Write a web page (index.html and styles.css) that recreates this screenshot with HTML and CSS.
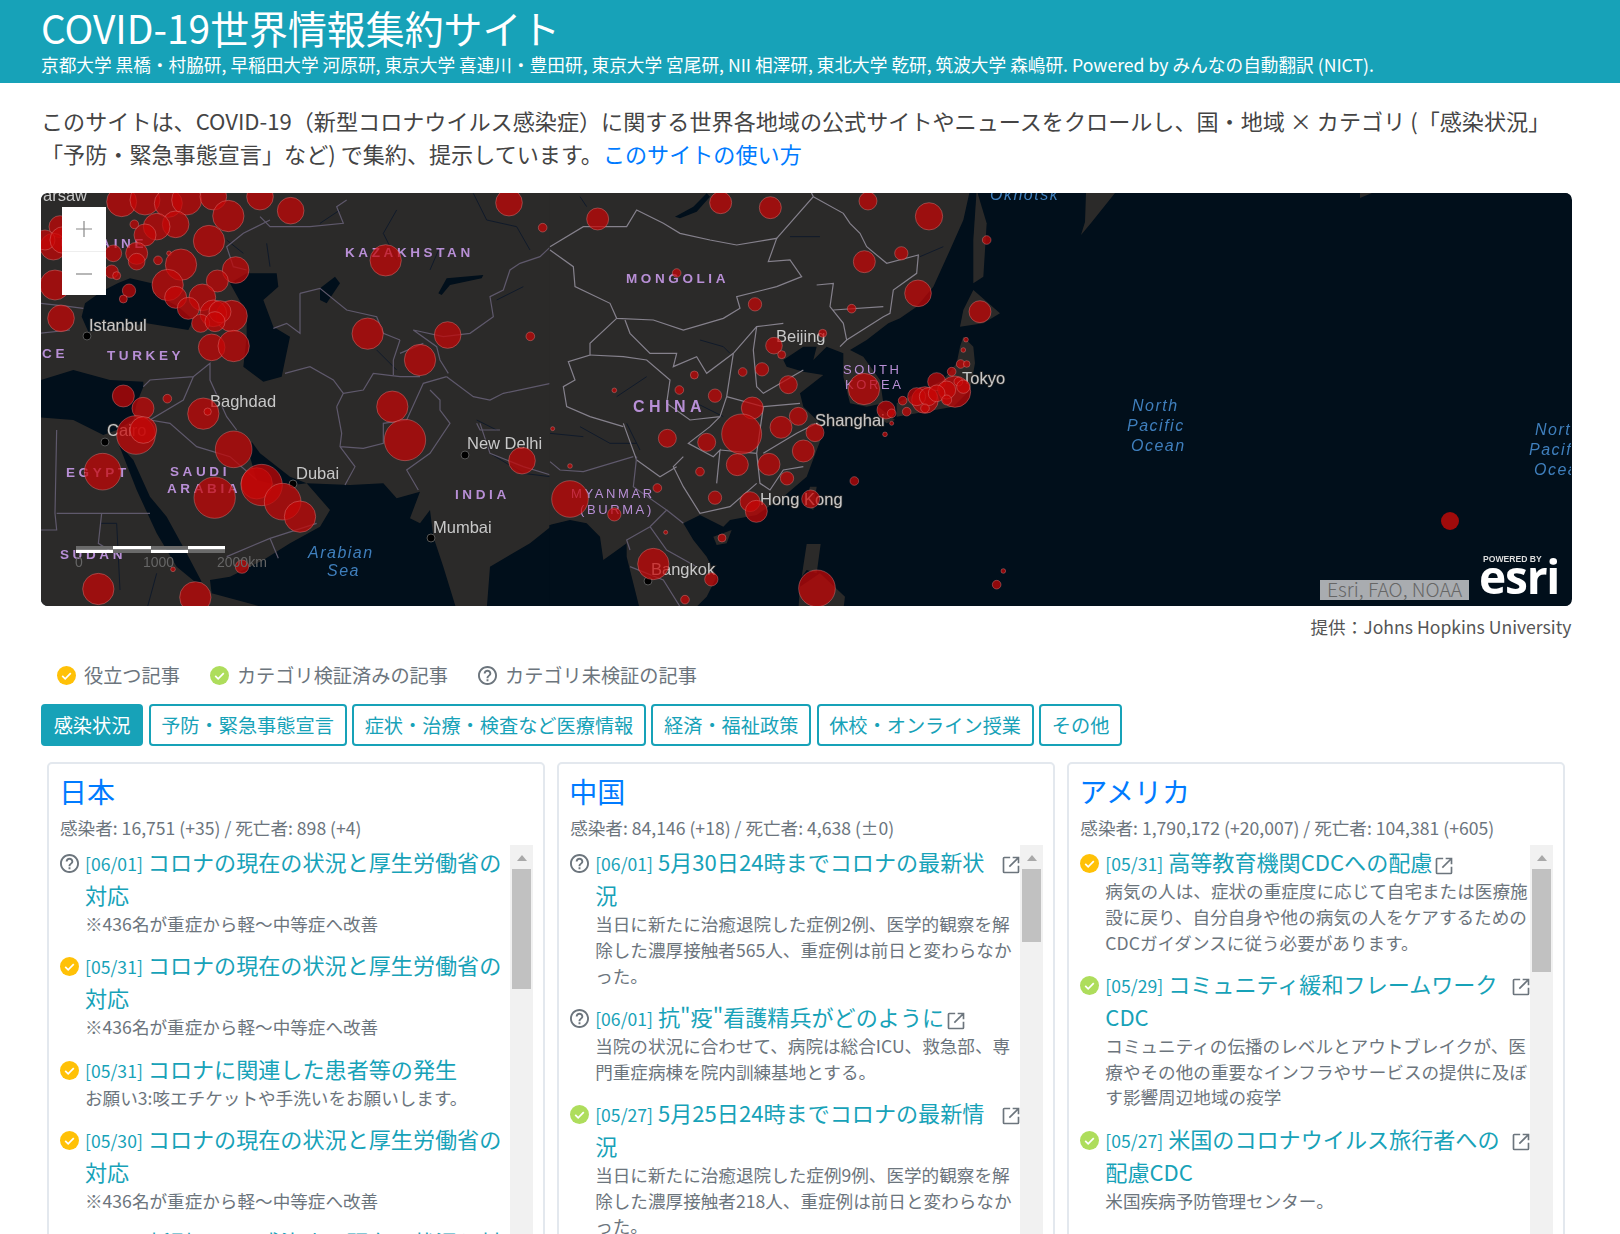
FILE: index.html
```html
<!DOCTYPE html>
<html lang="ja">
<head>
  <meta charset="UTF-8">
  <title>COVID-19世界情報集約サイト</title>
  <link rel="stylesheet" href="styles.css">
</head>
<body>

  <svg class="defs">
    <symbol id="check" viewBox="0 0 20 20">
      <circle cx="10" cy="10" r="10" fill="currentColor"/>
      <path d="M5.5 10.3l3.1 3.1 5.9-6" fill="none" stroke="#fff" stroke-width="1.8"/>
    </symbol>
    <symbol id="help" viewBox="2 2 20 20">
      <path fill="currentColor" d="M11 18h2v-2h-2v2zm1-16C6.48 2 2 6.48 2 12s4.48 10 10 10 10-4.48 10-10S17.52 2 12 2zm0 18c-4.41 0-8-3.59-8-8s3.59-8 8-8 8 3.59 8 8-3.59 8-8 8zm0-14c-2.21 0-4 1.79-4 4h2c0-1.1.9-2 2-2s2 .9 2 2c0 2-3 1.75-3 5h2c0-2.25 3-2.5 3-5 0-2.21-1.79-4-4-4z"/>
    </symbol>
    <symbol id="ext" viewBox="0 0 24 24">
      <path d="M11 3H4a1 1 0 0 0-1 1v16a1 1 0 0 0 1 1h16a1 1 0 0 0 1-1v-7M10 14L21 3M14 3h7v7" fill="none" stroke="currentColor" stroke-width="2"/>
    </symbol>
  </svg>

  <header class="site-header">
    <h1>COVID-19世界情報集約サイト</h1>
    <p>京都大学 黒橋・村脇研, 早稲田大学 河原研, 東京大学 喜連川・豊田研, 東京大学 宮尾研, NII 相澤研, 東北大学 乾研, 筑波大学 森嶋研. Powered by みんなの自動翻訳 (NICT).</p>
  </header>

  <main class="content">
    <p class="intro">このサイトは、COVID-19（新型コロナウイルス感染症）に関する世界各地域の公式サイトやニュースをクロールし、国・地域 × カテゴリ (「感染状況」「予防・緊急事態宣言」など) で集約、提示しています。<a href="#">このサイトの使い方</a></p>

    <div class="map">
      <svg class="map-svg" viewBox="41 193 1530 413" width="1530" height="413">
        <rect class="sea" x="41" y="193" width="1530" height="413"/>

        <!-- west half -->
        <g transform="translate(30 190) scale(.33333)">
          <rect class="land" x="0" y="0" width="1562" height="1260"/>
          <g class="sea">
            <path d="M165 340Q230 290 300 265L365 280 370 310 445 350 490 390 475 420 350 400 290 410 230 420 175 425 155 380Z"/>
            <path d="M600 280L650 250 740 250 745 290 700 330 730 410 780 440 755 560 700 575 640 530 650 440 650 370Z"/>
            <path d="M0 580L130 540 240 570 340 575 340 590 320 640 310 690 260 720 220 735 130 690 0 680Z"/>
            <path d="M265 760L310 810 360 920 410 980 470 1090 515 1175 500 1180 440 1130 380 1030 320 900Z"/>
            <path d="M665 755L690 790 780 860 830 880 790 885 720 880 680 870 660 800Z"/>
            <path d="M830 880L960 885 1060 880 1100 925 1170 905 1140 985 1170 1000 1200 960 1210 1040 1240 1130 1280 1260 730 1260 545 1210 540 1170 600 1160 700 1110 780 1060 870 1010 900 960Z"/>
            <path d="M1380 1130L1500 1060 1562 1010 1562 1260 1370 1260Z"/>
            <path d="M1225 310L1250 265 1360 255 1355 265 1260 285 1235 315Z"/>
            <path d="M870 295L915 260 930 280 890 340 870 330Z"/>
          </g>
          <g class="river">
            <path d="M1330 10L1370 90 1460 110 1500 180M1100 60L1060 130 1100 210M710 160L720 230M590 150L640 190"/>
            <path d="M1040 480L1100 540M1340 690L1400 720M1380 790L1480 850 1560 860M210 1000L260 1000 270 1200M380 1150L350 1260"/>
            <path d="M870 100L930 60M1230 170L1200 240M1480 290L1400 330"/>
          </g>
          <g class="border">
            <path d="M810 310L870 295 950 360 1040 380 1060 430 1110 450M810 310L810 430 770 400 730 415"/>
            <path d="M765 550L840 530 910 570 940 610 920 650M940 610L1000 600 1030 550 1110 560 1170 560"/>
            <path d="M920 650L935 730 930 770 975 830 945 885M930 770L1000 775 1060 760 1060 700 1130 690 1180 580 1250 560"/>
            <path d="M1200 600L1230 630 1230 660 1260 700 1200 790 1130 840 1165 900"/>
            <path d="M1250 560L1330 620 1380 630 1420 610 1562 580M1350 700L1380 790 1480 830 1562 855"/>
            <path d="M690 80L720 110 840 110 940 100 920 50 950 30M720 90L640 130 590 170 610 230 650 240"/>
            <path d="M1562 170L1530 200 1470 220 1440 240 1420 300 1380 320 1390 380 1320 430 1240 440 1150 420 1220 470 1230 510 1255 550"/>
            <path d="M1110 450L1090 510 1090 555M1110 490L1180 460"/>
            <path d="M340 590L360 570 490 560 540 520 540 570 590 680 620 720M490 560L460 630 360 690 420 700 500 770 600 800 680 870"/>
            <path d="M80 720L75 970 80 1020 30 1020M80 970L290 970 360 970M215 970L205 1060 270 1100"/>
            <path d="M590 1100L720 1045 860 1000M720 1045L745 1105"/>
            <path d="M1340 700L1350 720 1410 720"/>
            <path d="M30 340L120 350 160 355M30 430L120 420"/>
          </g>
        </g>

        <!-- east half -->
        <g transform="translate(550 190) scale(.33333)">
          <path class="sea" d="M-2 1005L60 990 110 1000 150 1040 160 1110 230 1060 230 1100 270 1260-2 1260Z"/>
          <path class="land" d="M-2 0H1260L1240 90 1200 180 1150 290 1100 350 1050 385 1015 400 950 450 900 480 940 500 990 570 1000 640 950 650 900 640 880 560 880 490 830 470 790 510 800 470 760 470 700 510 710 530 760 545 820 555 750 610 760 650 810 700 820 730 800 780 770 860 700 920 620 975 540 990 520 1010 450 975 400 1000 430 1050 470 1100 500 1160 470 1220 430 1260H270L230 1100 230 1060 160 1110 150 1040 110 1000 60 990-2 1005Z"/>
          <g class="land">
            <path d="M1280 0L1310 100 1300 260 1270 280 1270 150Z"/>
            <path d="M1270 300L1350 370 1300 400 1230 410 1240 360Z"/>
            <path d="M1240 440L1270 470 1275 520 1260 600 1210 650 1100 670 1040 680 1040 640 1100 610 1180 570 1220 520 1230 470Z"/>
            <path d="M985 650L1035 690 1010 700 985 680Z"/>
            <path d="M490 1040L545 1020 530 1060 500 1065Z"/>
            <path d="M780 890L800 890 790 960 765 945Z"/>
            <path d="M770 1062H812L800 1150 770 1140 755 1160Z"/>
            <path d="M750 1190L810 1150 885 1220 880 1260H745Z"/>
          </g>
          <path class="sea" d="M375 80L430 50 470 10 480 20 440 65 390 85Z"/>
          <g class="river">
            <path d="M90 20L110 50M450 450L520 470 540 490M90 710L180 760 260 760M0 730L100 740M230 700L270 780"/>
            <path d="M720 140L810 140M1110 200L1180 170M440 640L520 680M200 620L290 560"/>
          </g>
          <g class="border bright">
            <path d="M0 170L100 110 230 110 260 60 340 100 390 130 480 150 560 165 680 145 655 215 720 210 755 260 680 290 640 300 560 320 570 355 520 385 400 420 310 390 200 385 180 340 75 290 70 230 0 180"/>
            <path d="M680 145L790 20 780 0M790 20L880 70 900 100 930 130 950 170 1010 220 1105 195 1100 250 1030 300 1020 370 1000 380 890 450 870 470"/>
            <path d="M800 285L850 280 840 350 880 400 890 450M850 360L1000 350"/>
            <path d="M200 385L120 460 120 495 55 515 75 570 40 590 50 650 120 680 220 710"/>
            <path d="M225 390L240 430 300 490 380 490 370 530 440 500 470 550 550 490 620 410 700 400"/>
            <path d="M120 495L220 500 290 510 360 570 350 640 420 690 510 680M550 490L530 620 510 680"/>
            <path d="M510 680L480 710 415 760 490 800 510 780 500 880M400 800L370 830 400 890 450 970 540 950 620 880"/>
            <path d="M640 790L740 730 800 700M620 790L630 880 660 900 700 840 760 830M510 780L620 790 640 650 530 620"/>
            <path d="M620 410L610 480 620 590 640 610 760 540M640 650L750 640"/>
            <path d="M260 810L220 700M260 810L330 860 380 830"/>
          </g>
          <g class="border">
            <path d="M260 800L250 890 350 960 300 1010 230 1050 240 1080M0 815L30 840 100 845 250 800"/>
            <path d="M350 960L400 1000M300 1010L350 1080 440 1130M240 1130L340 1170 390 1250"/>
          </g>
        </g>
        <path class="land" d="M1086 193H1115L1091 223 1081 235 1085 222ZM1360 198L1372 193H1360Z"/>

        <!-- city dots -->
        <g class="city-dot">
          <circle cx="87" cy="336" r="4"/><circle cx="105" cy="442" r="4"/><circle cx="293" cy="484" r="4"/><circle cx="465" cy="455" r="4"/><circle cx="431" cy="538" r="4"/><circle cx="648" cy="581" r="4"/>
        </g>

        <!-- labels sit under the case circles -->
        <g class="country">
          <text x="345" y="257">KAZAKHSTAN</text>
          <text x="107" y="360">TURKEY</text>
          <text x="68" y="358" text-anchor="end">GREECE</text>
          <text x="147" y="248" text-anchor="end">UKRAINE</text>
          <text x="66" y="477">EGYPT</text>
          <text x="170" y="476">SAUDI</text>
          <text x="167" y="493">ARABIA</text>
          <text x="455" y="499">INDIA</text>
          <text x="60" y="559">SUDAN</text>
          <text x="626" y="283">MONGOLIA</text>
          <text class="big" x="633" y="412">CHINA</text>
          <text class="thin" x="843" y="374">SOUTH</text>
          <text class="thin" x="845" y="389">KOREA</text>
          <text class="thin" x="571" y="498">MYANMAR</text>
          <text class="thin" x="580" y="514">(BURMA)</text>
        </g>
        <g class="city">
          <text x="87" y="201" text-anchor="end">Warsaw</text>
          <text x="89" y="331">Istanbul</text>
          <text x="210" y="407">Baghdad</text>
          <text x="107" y="436">Cairo</text>
          <text x="296" y="479">Dubai</text>
          <text x="467" y="449">New Delhi</text>
          <text x="433" y="533">Mumbai</text>
          <text x="776" y="342">Beijing</text>
          <text x="962" y="384">Tokyo</text>
          <text x="815" y="426">Shanghai</text>
          <text x="760" y="505">Hong Kong</text>
          <text x="651" y="575">Bangkok</text>
        </g>
        <g class="ocean">
          <text x="308" y="558">Arabian</text>
          <text x="327" y="576">Sea</text>
          <text x="990" y="200">Okhotsk</text>
          <text x="1132" y="411">North</text>
          <text x="1127" y="431">Pacific</text>
          <text x="1131" y="451">Ocean</text>
          <text x="1535" y="435">North</text>
          <text x="1529" y="455">Pacific</text>
          <text x="1534" y="475">Ocean</text>
        </g>

        <!-- case circles, west -->
        <g class="cases" transform="translate(30 190) scale(.33333)">
          <circle cx="275" cy="35" r="45"/><circle cx="345" cy="30" r="45"/><circle cx="415" cy="40" r="42"/><circle cx="470" cy="30" r="45"/><circle cx="550" cy="20" r="40"/><circle cx="690" cy="20" r="40"/><circle cx="782" cy="62" r="40"/><circle cx="595" cy="78" r="47"/><circle cx="537" cy="153" r="47"/><circle cx="437" cy="103" r="40"/><circle cx="380" cy="110" r="40"/><circle cx="345" cy="135" r="33"/><circle cx="313" cy="103" r="13"/>
          <circle cx="90" cy="110" r="33"/><circle cx="70" cy="170" r="40"/><circle cx="45" cy="150" r="30"/><circle cx="100" cy="150" r="40"/><circle cx="250" cy="190" r="25"/><circle cx="320" cy="190" r="33"/><circle cx="320" cy="215" r="25"/><circle cx="384" cy="211" r="13"/><circle cx="417" cy="190" r="7"/><circle cx="453" cy="224" r="47"/><circle cx="617" cy="240" r="40"/><circle cx="562" cy="273" r="33"/><circle cx="413" cy="285" r="47"/><circle cx="245" cy="245" r="20"/><circle cx="260" cy="257" r="12"/><circle cx="75" cy="285" r="45"/><circle cx="297" cy="302" r="20"/><circle cx="280" cy="327" r="12"/>
          <circle cx="437" cy="322" r="33"/><circle cx="517" cy="322" r="40"/><circle cx="475" cy="355" r="33"/><circle cx="605" cy="378" r="47"/><circle cx="550" cy="370" r="40"/><circle cx="570" cy="365" r="33"/><circle cx="512" cy="400" r="27"/><circle cx="555" cy="395" r="30"/><circle cx="545" cy="472" r="40"/><circle cx="611" cy="468" r="47"/><circle cx="93" cy="385" r="40"/>
          <circle cx="1067" cy="211" r="47"/><circle cx="1013" cy="431" r="47"/><circle cx="1253" cy="435" r="40"/><circle cx="1170" cy="510" r="47"/><circle cx="1501" cy="439" r="13"/><circle cx="1538" cy="113" r="13"/><circle cx="1437" cy="38" r="40"/>
          <circle cx="280" cy="618" r="33"/><circle cx="339" cy="655" r="33"/><circle cx="412" cy="626" r="13"/><circle cx="520" cy="671" r="47"/><circle cx="533" cy="665" r="11"/><circle cx="318" cy="735" r="58"/><circle cx="340" cy="720" r="40"/><circle cx="218" cy="845" r="55"/><circle cx="611" cy="778" r="55"/><circle cx="554" cy="923" r="62"/><circle cx="680" cy="880" r="47"/><circle cx="695" cy="885" r="62"/><circle cx="758" cy="935" r="55"/><circle cx="810" cy="980" r="47"/><circle cx="1087" cy="650" r="47"/><circle cx="1125" cy="750" r="62"/><circle cx="1476" cy="812" r="40"/><circle cx="636" cy="1130" r="20"/><circle cx="429" cy="1138" r="7"/><circle cx="205" cy="1197" r="47"/><circle cx="496" cy="1222" r="47"/>
        </g>
        <!-- case circles, east -->
        <g class="cases" transform="translate(550 190) scale(.33333)">
          <circle cx="143" cy="87" r="33"/><circle cx="512" cy="38" r="33"/><circle cx="661" cy="53" r="33"/><circle cx="954" cy="33" r="27"/><circle cx="1137" cy="79" r="41"/><circle cx="1310" cy="150" r="13"/><circle cx="943" cy="215" r="33"/><circle cx="1054" cy="190" r="20"/><circle cx="1104" cy="310" r="40"/><circle cx="1290" cy="365" r="33"/><circle cx="905" cy="356" r="13"/><circle cx="380" cy="249" r="13"/><circle cx="615" cy="343" r="20"/><circle cx="818" cy="430" r="12"/><circle cx="672" cy="467" r="25"/><circle cx="695" cy="494" r="12"/><circle cx="636" cy="538" r="20"/><circle cx="578" cy="546" r="13"/><circle cx="433" cy="555" r="12"/><circle cx="715" cy="584" r="27"/><circle cx="388" cy="600" r="13"/><circle cx="193" cy="601" r="7"/><circle cx="495" cy="617" r="20"/><circle cx="607" cy="654" r="33"/><circle cx="745" cy="679" r="27"/><circle cx="575" cy="732" r="60"/><circle cx="693" cy="712" r="33"/><circle cx="795" cy="728" r="27"/><circle cx="352" cy="745" r="27"/><circle cx="470" cy="757" r="27"/><circle cx="760" cy="783" r="33"/><circle cx="562" cy="824" r="33"/><circle cx="657" cy="823" r="33"/><circle cx="450" cy="845" r="13"/><circle cx="711" cy="865" r="20"/><circle cx="322" cy="894" r="13"/><circle cx="495" cy="923" r="20"/><circle cx="600" cy="935" r="30"/><circle cx="619" cy="964" r="33"/><circle cx="782" cy="927" r="27"/><circle cx="60" cy="927" r="55"/><circle cx="193" cy="973" r="20"/><circle cx="60" cy="828" r="7"/><circle cx="8" cy="716" r="6"/><circle cx="347" cy="1027" r="6"/><circle cx="516" cy="1044" r="12"/><circle cx="310" cy="1122" r="47"/><circle cx="484" cy="1168" r="20"/><circle cx="405" cy="1229" r="13"/><circle cx="801" cy="1195" r="55"/><circle cx="1360" cy="1143" r="7"/><circle cx="1340" cy="1184" r="13"/><circle cx="913" cy="873" r="13"/><circle cx="1005" cy="733" r="7"/><circle cx="1025" cy="700" r="6"/><circle cx="942" cy="597" r="47"/><circle cx="1008" cy="660" r="27"/><circle cx="1025" cy="670" r="13"/><circle cx="1058" cy="632" r="13"/><circle cx="1070" cy="665" r="13"/><circle cx="1125" cy="630" r="40"/><circle cx="1100" cy="620" r="27"/><circle cx="1135" cy="620" r="27"/><circle cx="1160" cy="575" r="27"/><circle cx="1215" cy="605" r="47"/><circle cx="1190" cy="600" r="27"/><circle cx="1205" cy="545" r="13"/><circle cx="1232" cy="522" r="13"/><circle cx="1250" cy="522" r="10"/><circle cx="1240" cy="480" r="7"/><circle cx="1248" cy="449" r="7"/><circle cx="1160" cy="610" r="25"/><circle cx="1225" cy="575" r="13"/><circle cx="1240" cy="590" r="20"/><circle cx="1190" cy="630" r="15"/><circle cx="1125" cy="655" r="13"/>
        </g>
        <circle class="case-solo" cx="1450" cy="521" r="9"/>

        <!-- scale bar -->
        <rect class="bar-white" x="76" y="549.5" width="37" height="3.5"/>
        <rect class="bar-gray" x="76" y="546" width="37" height="3.5"/>
        <rect class="bar-white" x="113" y="546" width="38" height="3.5"/>
        <rect class="bar-gray" x="113" y="549.5" width="38" height="3.5"/>
        <rect class="bar-white" x="151" y="549.5" width="37" height="3.5"/>
        <rect class="bar-gray" x="151" y="546" width="37" height="3.5"/>
        <rect class="bar-white" x="188" y="546" width="37" height="3.5"/>
        <rect class="bar-gray" x="188" y="549.5" width="37" height="3.5"/>
        <g class="scale-text">
          <text x="75" y="567">0</text>
          <text x="143" y="567">1000</text>
          <text x="217" y="567">2000km</text>
        </g>

        <text class="esri-small" x="1483" y="562">POWERED BY</text>
        <text class="esri-big" x="1479" y="594">esri</text>
      </svg>

      <div class="zoom-ctl">
        <button><svg width="18" height="18" viewBox="0 0 18 18"><path d="M9 1v16M1 9h16"/></svg></button>
        <button><svg width="18" height="18" viewBox="0 0 18 18"><path d="M1 9h16"/></svg></button>
      </div>
      <div class="attribution">Esri, FAO, NOAA</div>
    </div>

    <p class="credit">提供：Johns Hopkins University</p>

    <ul class="legend">
      <li><svg class="ic useful"><use href="#check"/></svg>役立つ記事</li>
      <li><svg class="ic verified"><use href="#check"/></svg>カテゴリ検証済みの記事</li>
      <li><svg class="ic unknown"><use href="#help"/></svg>カテゴリ未検証の記事</li>
    </ul>

    <div class="tabs">
      <button class="tab active">感染状況</button>
      <button class="tab">予防・緊急事態宣言</button>
      <button class="tab">症状・治療・検査など医療情報</button>
      <button class="tab">経済・福祉政策</button>
      <button class="tab">休校・オンライン授業</button>
      <button class="tab">その他</button>
    </div>

    <div class="cards">

      <section class="card">
        <h2>日本</h2>
        <p class="stats">感染者: 16,751 (+35) / 死亡者: 898 (+4)</p>
        <div class="scroller">
          <ul class="items">
            <li class="item">
              <svg class="ic unknown"><use href="#help"/></svg>
              <div class="body">
                <a class="title" href="#"><span class="date">[06/01]</span> コロナの現在の状況と厚生労働省の対応</a>
                <p>※436名が重症から軽～中等症へ改善</p>
              </div>
            </li>
            <li class="item">
              <svg class="ic useful"><use href="#check"/></svg>
              <div class="body">
                <a class="title" href="#"><span class="date">[05/31]</span> コロナの現在の状況と厚生労働省の対応</a>
                <p>※436名が重症から軽～中等症へ改善</p>
              </div>
            </li>
            <li class="item">
              <svg class="ic useful"><use href="#check"/></svg>
              <div class="body">
                <a class="title" href="#"><span class="date">[05/31]</span> コロナに関連した患者等の発生</a>
                <p>お願い3:咳エチケットや手洗いをお願いします。</p>
              </div>
            </li>
            <li class="item">
              <svg class="ic useful"><use href="#check"/></svg>
              <div class="body">
                <a class="title" href="#"><span class="date">[05/30]</span> コロナの現在の状況と厚生労働省の対応</a>
                <p>※436名が重症から軽～中等症へ改善</p>
              </div>
            </li>
            <li class="item">
              <svg class="ic useful"><use href="#check"/></svg>
              <div class="body">
                <a class="title" href="#"><span class="date">[05/30]</span> 新型コロナ感染症の現在の状況と対応</a>
              </div>
            </li>
          </ul>
          <div class="scrollbar"><span class="arrow"></span><span class="thumb" style="height:120px"></span></div>
        </div>
      </section>

      <section class="card">
        <h2>中国</h2>
        <p class="stats">感染者: 84,146 (+18) / 死亡者: 4,638 (±0)</p>
        <div class="scroller">
          <ul class="items">
            <li class="item">
              <svg class="ic unknown"><use href="#help"/></svg>
              <div class="body">
                <a class="title" href="#"><svg class="ext right"><use href="#ext"/></svg><span class="date">[06/01]</span> 5月30日24時までコロナの最新状況</a>
                <p>当日に新たに治癒退院した症例2例、医学的観察を解除した濃厚接触者565人、重症例は前日と変わらなかった。</p>
              </div>
            </li>
            <li class="item">
              <svg class="ic unknown"><use href="#help"/></svg>
              <div class="body">
                <a class="title" href="#"><span class="date">[06/01]</span> 抗"疫"看護精兵がどのように<svg class="ext"><use href="#ext"/></svg></a>
                <p>当院の状況に合わせて、病院は総合ICU、救急部、専門重症病棟を院内訓練基地とする。</p>
              </div>
            </li>
            <li class="item">
              <svg class="ic verified"><use href="#check"/></svg>
              <div class="body">
                <a class="title" href="#"><svg class="ext right"><use href="#ext"/></svg><span class="date">[05/27]</span> 5月25日24時までコロナの最新情況</a>
                <p>当日に新たに治癒退院した症例9例、医学的観察を解除した濃厚接触者218人、重症例は前日と変わらなかった。</p>
              </div>
            </li>
          </ul>
          <div class="scrollbar"><span class="arrow"></span><span class="thumb" style="height:73px"></span></div>
        </div>
      </section>

      <section class="card">
        <h2>アメリカ</h2>
        <p class="stats">感染者: 1,790,172 (+20,007) / 死亡者: 104,381 (+605)</p>
        <div class="scroller">
          <ul class="items">
            <li class="item">
              <svg class="ic useful"><use href="#check"/></svg>
              <div class="body">
                <a class="title" href="#"><span class="date">[05/31]</span> 高等教育機関CDCへの配慮<svg class="ext"><use href="#ext"/></svg></a>
                <p>病気の人は、症状の重症度に応じて自宅または医療施設に戻り、自分自身や他の病気の人をケアするためのCDCガイダンスに従う必要があります。</p>
              </div>
            </li>
            <li class="item">
              <svg class="ic verified"><use href="#check"/></svg>
              <div class="body">
                <a class="title" href="#"><svg class="ext right"><use href="#ext"/></svg><span class="date">[05/29]</span> コミュニティ緩和フレームワークCDC</a>
                <p>コミュニティの伝播のレベルとアウトブレイクが、医療やその他の重要なインフラやサービスの提供に及ぼす影響周辺地域の疫学</p>
              </div>
            </li>
            <li class="item">
              <svg class="ic verified"><use href="#check"/></svg>
              <div class="body">
                <a class="title" href="#"><svg class="ext right"><use href="#ext"/></svg><span class="date">[05/27]</span> 米国のコロナウイルス旅行者への配慮CDC</a>
                <p>米国疾病予防管理センター。</p>
              </div>
            </li>
          </ul>
          <div class="scrollbar"><span class="arrow"></span><span class="thumb" style="height:103px"></span></div>
        </div>
      </section>

    </div>
  </main>

</body>
</html>
```

FILE: styles.css
```css
* {
  box-sizing: border-box;
}

html, body {
  height: 100%;
}

body {
  margin: 0;
  overflow: hidden;
  background-color: #fff;
  color: #444;
  font-family: "Noto Sans CJK JP", "Noto Sans", sans-serif;
  font-size: 16px;
}

a {
  text-decoration: none;
}

.defs {
  display: none;
}

/* header */
.site-header {
  height: 83px;
  padding: 3px 41px 0;
  background-color: #17a2b8;
  color: #fff;
}

.site-header h1 {
  margin: 0;
  font-size: 38.9px;
  font-weight: 400;
  line-height: 48px;
}

.site-header p {
  margin: 1px 0 0;
  font-size: 17.66px;
  line-height: 26px;
}

/* page */
.content {
  padding: 21px 48.5px 0 41px;
}

.intro {
  margin: 0 0 23px;
  font-size: 22.1px;
  line-height: 33px;
  text-spacing-trim: space-all;
}

.intro a {
  color: #007bff;
}

/* map */
.map {
  position: relative;
  height: 413px;
  background-color: #010f1b;
  border-radius: 7px;
  overflow: hidden;
}

.map-svg {
  display: block;
  filter: blur(.6px);
  font-family: "Liberation Sans", Arial, sans-serif;
}

.sea {
  fill: #010f1b;
}

.land {
  fill: #2b2a29;
}

.border path {
  fill: none;
  stroke: #5f596c;
  stroke-width: 1.2;
  vector-effect: non-scaling-stroke;
}

.border.bright path {
  stroke: #85818c;
}

.river path {
  fill: none;
  stroke: #101a2a;
  stroke-width: 1;
  vector-effect: non-scaling-stroke;
}

.cases circle {
  fill: #c70606;
  fill-opacity: .72;
  stroke: #e08a8a;
  stroke-opacity: .4;
  stroke-width: 1;
  vector-effect: non-scaling-stroke;
}

.case-solo {
  fill: #a00b0b;
}

.city-dot circle {
  fill: #000;
  stroke: #555;
  stroke-width: 1;
}

.country text {
  fill: #b88fd6;
  font-size: 13.5px;
  font-weight: 700;
  letter-spacing: 3.6px;
}

.country .big {
  font-size: 16px;
  letter-spacing: 4.5px;
}

.country .thin {
  font-size: 13px;
  font-weight: 400;
  letter-spacing: 2.6px;
}

.city text {
  fill: #c8c8c8;
  font-size: 16.5px;
  paint-order: stroke;
  stroke: #2b2a29;
  stroke-width: 1.5px;
}

.ocean text {
  fill: #3f7fbd;
  font-size: 16px;
  font-style: italic;
  letter-spacing: 1.5px;
}

.bar-white {
  fill: #fff;
}

.bar-gray {
  fill: #6a6a6a;
}

.scale-text text {
  fill: #666;
  font-size: 14px;
}

.esri-small {
  fill: #ddd;
  font-size: 8.6px;
  font-weight: 700;
}

.esri-big {
  fill: #fff;
  font-family: "Open Sans", "Liberation Sans", sans-serif;
  font-size: 46px;
  font-weight: 700;
  letter-spacing: -1.2px;
}

.zoom-ctl {
  position: absolute;
  top: 14px;
  left: 21px;
  width: 44px;
  display: flex;
  flex-direction: column;
}

.zoom-ctl button {
  display: flex;
  align-items: center;
  justify-content: center;
  height: 44px;
  padding: 0;
  background-color: #fff;
  border: none;
  border-top: 1px solid #eee;
}

.zoom-ctl button:first-child {
  border-top: none;
}

.zoom-ctl path {
  fill: none;
  stroke: #888;
  stroke-width: 1.2;
}

.attribution {
  position: absolute;
  top: 387px;
  left: 1279px;
  width: 149px;
  height: 20px;
  background-color: #a9acb0;
  color: #666;
  font-size: 19.4px;
  font-weight: 300;
  line-height: 18px;
  text-align: center;
  white-space: nowrap;
}

.credit {
  margin: 8px 0 0;
  color: #555;
  font-size: 17.6px;
  line-height: 26px;
  text-align: right;
}

/* legend */
.legend {
  display: flex;
  gap: 30px;
  margin: 21px 0 0;
  padding: 0 0 0 16px;
  list-style: none;
  color: #6c757d;
  font-size: 19.2px;
  line-height: 29px;
}

.legend li {
  display: flex;
  align-items: center;
  gap: 8px;
}

.ic {
  flex: none;
  width: 19px;
  height: 19px;
}

.useful {
  color: #ffc107;
}

.verified {
  color: #aedd5c;
}

.unknown {
  color: #6c757d;
}

/* tabs */
.tabs {
  display: flex;
  gap: 5.5px;
  margin-top: 13.5px;
}

.tab {
  height: 42px;
  padding: 0 10.65px;
  background-color: #fff;
  border: 2px solid #17a2b8;
  border-radius: 4px;
  color: #17a2b8;
  font-family: inherit;
  font-size: 19.2px;
  line-height: 28px;
}

.tab.active {
  background-color: #17a2b8;
  color: #fff;
}

/* cards */
.cards {
  display: grid;
  grid-template-columns: repeat(3, 1fr);
  margin-top: 16px;
}

.card {
  height: 500px;
  margin: 0 6px;
  padding: 6px 10px 0 11px;
  background-color: #fff;
  border: 2px solid #e3e8ee;
  border-radius: 5px;
}

.card h2 {
  margin: 0 0 0 -1px;
  color: #007bff;
  font-size: 28px;
  font-weight: 400;
  line-height: 42px;
}

.stats {
  margin: 3px 0 4px;
  color: #6c757d;
  font-size: 17.6px;
  line-height: 26.4px;
}

.scroller {
  display: flex;
}

.items {
  flex: 1;
  min-width: 0;
  margin: 0;
  padding: 0;
  list-style: none;
}

.item {
  display: flex;
  gap: 6px;
  margin-bottom: 11.5px;
}

.item > .ic {
  margin-top: 9px;
}

.body {
  flex: 1;
  min-width: 0;
}

.title {
  display: block;
  color: #17a2b8;
  font-size: 22.1px;
  line-height: 33px;
}

.date {
  font-size: 17.6px;
  line-height: 1;
}

.ext {
  width: 20px;
  height: 20px;
  margin-left: 2px;
  color: #6c757d;
  vertical-align: -5px;
}

.ext.right {
  float: right;
  margin: 10px -1px 0 10px;
}

.body p {
  margin: 0;
  color: #6c757d;
  font-size: 17.6px;
  line-height: 25.8px;
}

/* fake scroll bar, the list is not really scrolled in this view */
.scrollbar {
  flex: none;
  display: flex;
  flex-direction: column;
  align-items: center;
  width: 23px;
  height: 400px;
  background-color: #f1f1f1;
}

.arrow {
  width: 0;
  height: 0;
  margin-top: 10px;
  border-left: 5px solid transparent;
  border-right: 5px solid transparent;
  border-bottom: 6px solid #a9a9a9;
}

.thumb {
  width: 19px;
  margin-top: 8px;
  background-color: #c1c1c1;
}
```
